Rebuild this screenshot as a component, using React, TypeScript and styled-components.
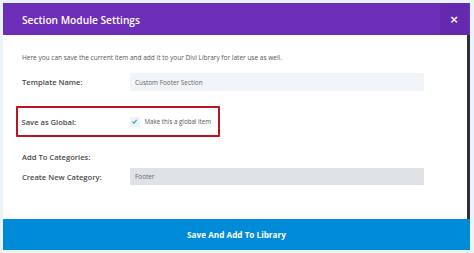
import React from "react";
import styled, { createGlobalStyle } from "styled-components";

const Global = createGlobalStyle`
  html, body { margin: 0; padding: 0; }
  body {
    background: #e9f4fb;
    font-family: "Open Sans", "Liberation Sans", sans-serif;
    width: 474px;
    height: 253px;
    overflow: hidden;
  }
`;

const Modal = styled.div`
  margin: 3px 4px 0 3px;
  width: 467px;
  display: flex;
  flex-direction: column;
  background: #fff;
`;

const Header = styled.div`
  height: 32px;
  background: #6c2eb9;
  display: flex;
  align-items: center;
  justify-content: space-between;
`;

const Title = styled.h1`
  margin: 1px 0 0 19px;
  font-size: 10.2px;
  font-weight: 600;
  color: #fff;
  letter-spacing: 0;
`;

const Close = styled.button`
  width: 28px;
  height: 32px;
  border: 0;
  background: #6429ae;
  color: #fff;
  font-family: "DejaVu Sans", sans-serif;
  font-weight: 700;
  font-size: 11px;
  padding: 0;
  margin-right: 2px;
  display: flex;
  align-items: center;
  justify-content: center;
`;

const Body = styled.div`
  height: 184px;
  border-right: 3px solid #2a3035;
  padding: 18px 0 0 19px;
  box-sizing: border-box;
  display: flex;
  flex-direction: column;
`;

const Intro = styled.p`
  margin: 0 0 11px;
  font-size: 6.5px;
  color: #555;
`;

const Row = styled.div<{ $h?: number }>`
  display: flex;
  align-items: center;
  height: ${(p) => p.$h ?? 18}px;
`;

const Label = styled.div`
  width: 108px;
  font-size: 7.6px;
  font-weight: 600;
  color: #4a4a4a;
`;

const Field = styled.div<{ $bg: string }>`
  width: 294px;
  height: 100%;
  background: ${(p) => p.$bg};
  display: flex;
  align-items: center;
  padding-left: 5px;
  box-sizing: border-box;
  font-size: 6.4px;
  color: #666;
`;

const Highlight = styled.div`
  margin: 15px 0 0 -6px;
  width: 204px;
  height: 31px;
  box-sizing: border-box;
  border: 2.5px solid #c2121f;
  border-radius: 1px;
  display: flex;
  align-items: center;
  padding-left: 3.5px;
`;

const Check = styled.span`
  width: 10px;
  height: 10px;
  background: #eef2f5;
  display: flex;
  align-items: center;
  justify-content: center;
  margin-right: 5px;
`;

const CheckText = styled.span`
  font-size: 6.2px;
  color: #555;
`;

const Spacer = styled.div<{ $h: number }>`
  height: ${(p) => p.$h}px;
`;

const Footer = styled.button`
  height: 31px;
  border: 0;
  background: #008bd9;
  color: #fff;
  font-family: "Open Sans", "Liberation Sans", sans-serif;
  font-weight: 700;
  font-size: 8.2px;
  padding: 0;
`;

export default function App() {
  return (
    <>
      <Global />
      <Modal>
        <Header>
          <Title>Section Module Settings</Title>
          <Close>×</Close>
        </Header>
        <Body>
          <Intro>
            Here you can save the current item and add it to your Divi Library for later use as well.
          </Intro>
          <Row>
            <Label>Template Name:</Label>
            <Field $bg="#f1f4f8">Custom Footer Section</Field>
          </Row>
          <Highlight>
            <Label>Save as Global:</Label>
            <Check>
              <svg width="7" height="7" viewBox="0 0 10 10">
                <path d="M2 5.2 L4.2 7.3 L8 2.8" fill="none" stroke="#2aa4b8" strokeWidth="1.6" />
              </svg>
            </Check>
            <CheckText>Make this a global item</CheckText>
          </Highlight>
          <Spacer $h={14} />
          <Row $h={12}>
            <Label>Add To Categories:</Label>
          </Row>
          <Spacer $h={5} />
          <Row $h={17}>
            <Label>Create New Category:</Label>
            <Field $bg="#dfe3e8">Footer</Field>
          </Row>
        </Body>
        <Footer>Save And Add To Library</Footer>
      </Modal>
    </>
  );
}
